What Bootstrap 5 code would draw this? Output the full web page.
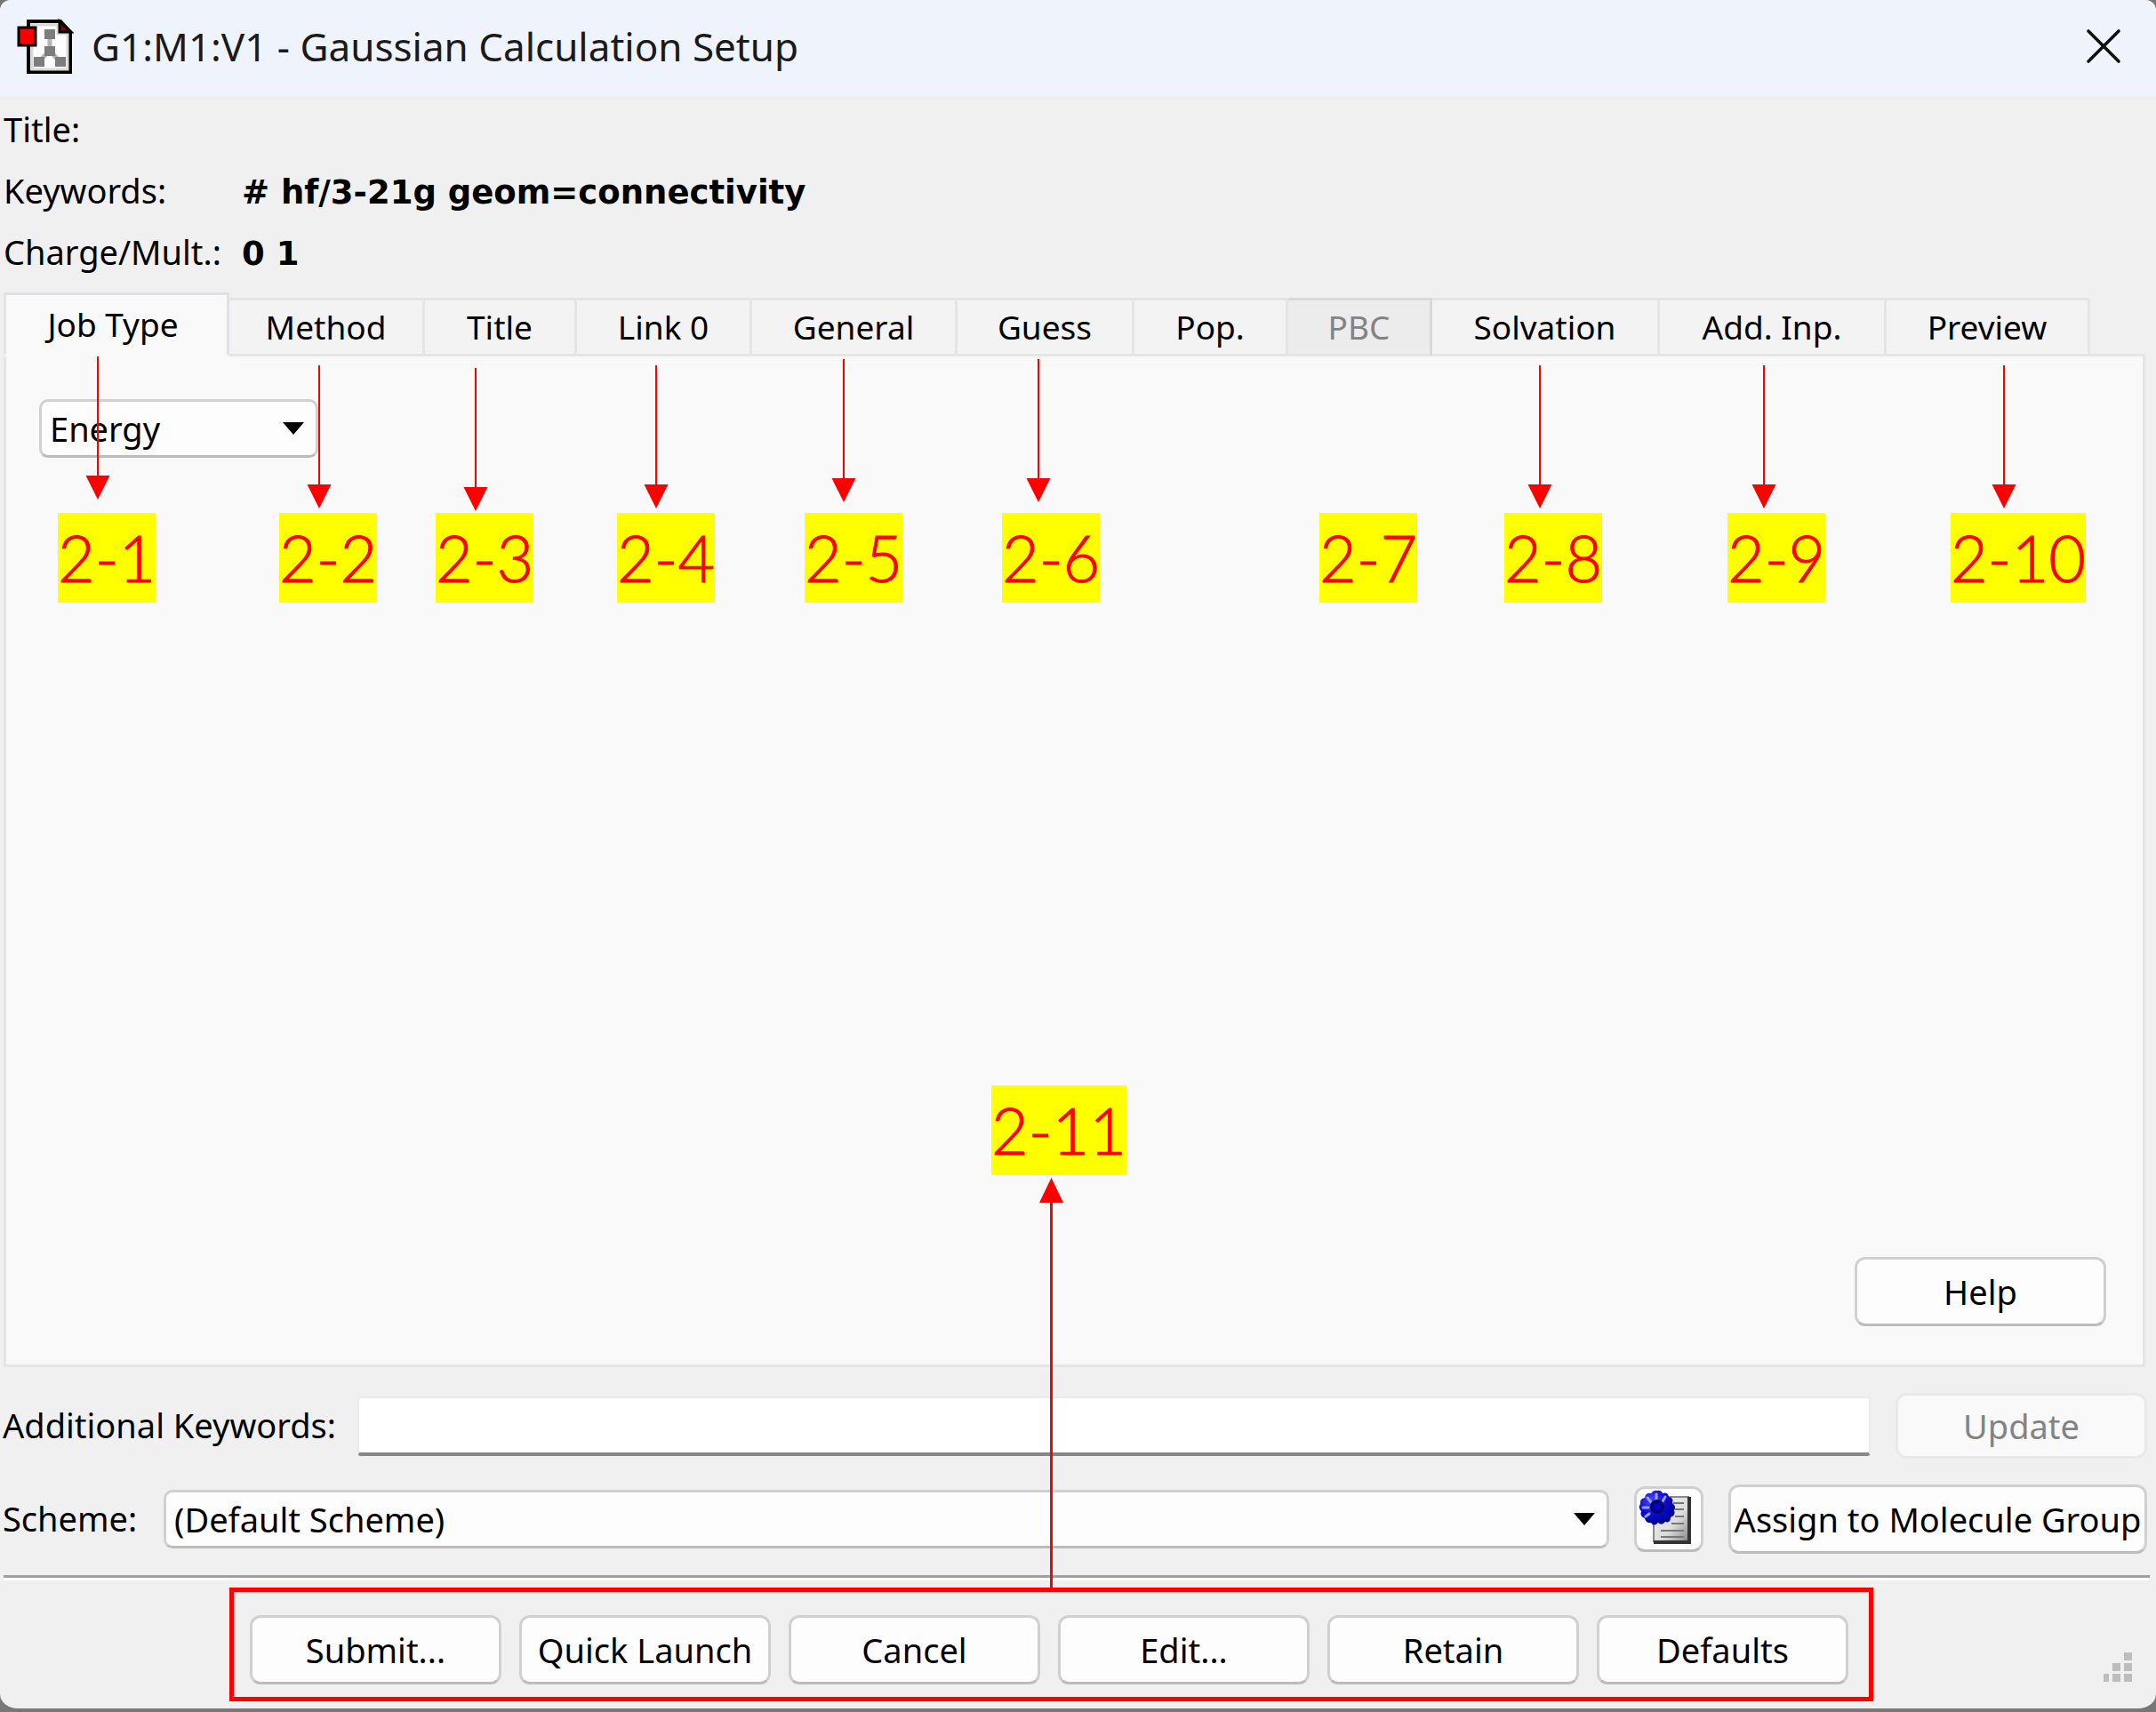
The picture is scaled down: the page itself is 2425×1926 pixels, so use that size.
<!DOCTYPE html>
<html lang="en">
<head>
<meta charset="utf-8">
<meta name="viewport" content="width=device-width, initial-scale=1">
<title>G1:M1:V1 - Gaussian Calculation Setup</title>
<link href="https://cdn.jsdelivr.net/npm/bootstrap@5.3.0/dist/css/bootstrap.min.css" rel="stylesheet">
<style>
  body { background: #777; color: #000; font: 38px/1.3 "Noto Sans", "Open Sans", sans-serif; }
  .win { min-height: 100vh; background: #f0f0f0; border-bottom: 4px solid #777; border-radius: 12px 12px 20px 20px; }
  .titlebar { height: 108px; padding: 0 39px 2px 19px; background: #eff3fb; font-size: 44px; color: #1a1a1a; border-radius: 12px 12px 0 0; }
  .title-icon { width: 64px; height: 64px; margin-right: 20px; }
  .close-x { border: 0; background: none; padding: 0; line-height: 0; margin-bottom: 2px; }

  .info { padding: 3px 4px 0; line-height: 69px; margin-bottom: 11px; }
  .info dt { width: 268px; font-weight: 400; white-space: nowrap; }
  .info dd { font: bold 37px/69px "DejaVu Sans", sans-serif; }
  .info > div { height: 69px; }

  .tabs { border: 0; padding-left: 4px; flex-wrap: nowrap; position: relative; z-index: 1; margin-bottom: -3px; height: 72px; }
  .tabs .nav-item { flex: 0 1 auto; }
  .tabs .nav-link { width: 100%; height: 66px; margin: 0; padding: 0; border: 3px solid #e5e5e5; border-left: 0; border-radius: 0; background: #f3f3f3; color: #000; font-size: 37px; line-height: 58px; }
  .tabs .nav-link:hover { border-color: #e5e5e5; }
  .tabs .nav-link.active { height: 72px; padding-right: 8px; border-left: 3px solid #e5e5e5; border-bottom-color: #f9f9f9; background: #f9f9f9; color: #000; line-height: 64px; }
  .tabs .nav-link.disabled { background: #ececec; border-color: #d9d9d9 #d9d9d9 #e5e5e5; color: #838383; }
  .w-job { width: 254px; } .w-method { width: 220px; } .w-title { width: 171px; } .w-link { width: 197px; }
  .w-general { width: 231px; } .w-guess { width: 199px; } .w-pop { width: 173px; } .w-pbc { width: 162px; }
  .w-solv { width: 256px; } .w-inp { width: 255px; } .w-prev { width: 229px; }

  .pane { margin: 0 12px 0 4px; padding: 48px 41px 43px 37px; background: #f9f9f9; border: 3px solid #e5e5e5; position: relative; }
  .combo { height: 66px; padding: 0 60px 0 9px; font-size: 38px; line-height: 58px; color: #000; border: 3px solid #d0d0d0; border-bottom-color: #bcbcbc; border-radius: 10px; background-color: #fdfdfd;
    background-image: url("data:image/svg+xml,%3Csvg xmlns='http://www.w3.org/2000/svg' viewBox='0 0 24 14'%3E%3Cpath d='M0 0h24L12 14z'/%3E%3C/svg%3E"); background-size: 24px 14px; background-position: right 13px center; }
  .combo-job { width: 314px; }
  .push { height: 78px; padding: 0; font-size: 38px; line-height: 70px; color: #000; white-space: nowrap; background: #fdfdfd; border: 3px solid #d0d0d0; border-bottom-color: #bcbcbc; border-radius: 12px; }
  .push:disabled { opacity: 1; height: 74px; line-height: 66px; color: #838383; background: #f9f9f9; border-color: #e9e9e9; }
  .push-std { width: 283px; }
  .push-wide { width: 471px; }
  .push-icon { width: 78px; height: 74px; line-height: 0; }
  .push-icon svg { overflow: visible; }

  .form-row { padding: 0 10px 0 3px; margin-top: 29px; }
  .lab-kw { width: 399px; } .lab-sch { width: 181px; }
  .gap-r { margin-right: 28px; }
  .line-edit { height: 67px; border: 2px solid #ebebeb; border-bottom: 4px solid #868686; border-radius: 4px; background: #fff; font-size: 38px; }
  .rule { margin: 24px 7px 8px 4px; border: 0; border-top: 3px solid #a0a0a0; height: 6px; background: #fff; opacity: 1; }
  .actions { margin-left: 258px; height: 128px; padding: 11px 23px 0 18px; border: 5px solid #f00; gap: 20px; }
  .grip { margin-right: 27px; }

  /* numbered callouts lying over the dialog */
  .marks { position: absolute; left: 0; top: 0; width: 2425px; height: 1922px; pointer-events: none; z-index: 5; }
  .tag { position: absolute; top: 577px; padding: 0; background: #ff0; color: #f00; font: 300 72px/101px Lato, sans-serif; -webkit-text-stroke: 1px #f00; white-space: nowrap; z-index: 6; }
  .t1 { left: 65px; } .t2 { left: 314px; } .t3 { left: 490px; } .t4 { left: 694px; } .t5 { left: 905px; } .t6 { left: 1127px; }
  .t7 { left: 1484px; } .t8 { left: 1692px; } .t9 { left: 1943px; } .t10 { left: 2194px; } .t11 { left: 1115px; top: 1221px; }
</style>
<script src="https://cdn.jsdelivr.net/npm/bootstrap@5.3.0/dist/js/bootstrap.bundle.min.js"></script>
</head>
<body>
<main class="win d-flex flex-column position-relative">
  <header class="titlebar d-flex align-items-center">
    <svg class="title-icon" viewBox="0 0 64 64" aria-hidden="true">
      <path d="M13 3H49L60 15V60H13Z" fill="#fff" stroke="#000" stroke-width="4"/>
      <path d="M17 7H46V17H57V57H17Z" fill="none" stroke="#d9d9d9" stroke-width="3"/>
      <path d="M48 3L61 15H48Z" fill="#8b0000" stroke="#000" stroke-width="3"/>
      <path d="M37 16V36L25 48M37 36L48 48" stroke="#b4b4b4" stroke-width="5" fill="none"/>
      <path d="M31 12h12v11H31zM31 31h12v11H31zM19 43h12v11H19zM43 43h12v11H43z" fill="#7d7d7d"/>
      <path d="M2 10H21V30H2Z" fill="#f00" stroke="#000" stroke-width="3"/>
    </svg>
    <span class="me-auto">G1:M1:V1 - Gaussian Calculation Setup</span>
    <button class="close-x" type="button" aria-label="Close"><svg width="40" height="40" viewBox="0 0 40 40"><path d="M3 3L37 37M37 3L3 37" stroke="#111" stroke-width="3.6" stroke-linecap="round"/></svg></button>
  </header>

  <dl class="info">
    <div class="d-flex align-items-baseline"><dt>Title:</dt><dd class="m-0"></dd></div>
    <div class="d-flex align-items-baseline"><dt>Keywords:</dt><dd class="m-0"># hf/3-21g geom=connectivity</dd></div>
    <div class="d-flex align-items-baseline"><dt>Charge/Mult.:</dt><dd class="m-0">0 1</dd></div>
  </dl>

  <ul class="nav nav-tabs tabs align-items-end" role="tablist">
    <li class="nav-item w-job"><button class="nav-link active" type="button" role="tab" aria-selected="true">Job Type</button></li>
    <li class="nav-item w-method"><button class="nav-link" type="button" role="tab">Method</button></li>
    <li class="nav-item w-title"><button class="nav-link" type="button" role="tab">Title</button></li>
    <li class="nav-item w-link"><button class="nav-link" type="button" role="tab">Link 0</button></li>
    <li class="nav-item w-general"><button class="nav-link" type="button" role="tab">General</button></li>
    <li class="nav-item w-guess"><button class="nav-link" type="button" role="tab">Guess</button></li>
    <li class="nav-item w-pop"><button class="nav-link" type="button" role="tab">Pop.</button></li>
    <li class="nav-item w-pbc"><button class="nav-link disabled" type="button" role="tab" disabled>PBC</button></li>
    <li class="nav-item w-solv"><button class="nav-link" type="button" role="tab">Solvation</button></li>
    <li class="nav-item w-inp"><button class="nav-link" type="button" role="tab">Add. Inp.</button></li>
    <li class="nav-item w-prev"><button class="nav-link" type="button" role="tab">Preview</button></li>
  </ul>

  <section class="pane flex-grow-1 d-flex flex-column justify-content-between">
    <select class="form-select combo combo-job" aria-label="Job type"><option>Energy</option></select>
    <button class="btn push push-std align-self-end" type="button">Help</button>
  </section>

  <div class="form-row d-flex align-items-center">
    <label class="lab-kw" for="kw">Additional Keywords:</label>
    <input id="kw" class="form-control line-edit flex-fill w-auto gap-r" type="text">
    <button class="btn push push-std" type="button" disabled>Update</button>
  </div>

  <div class="form-row d-flex align-items-center">
    <label class="lab-sch" for="scheme">Scheme:</label>
    <select id="scheme" class="form-select combo flex-fill w-auto gap-r"><option>(Default Scheme)</option></select>
    <button class="btn push push-icon gap-r" type="button" aria-label="Edit schemes">
      <svg width="62" height="64" viewBox="0 0 62 64">
        <defs>
          <linearGradient id="sheet" x1="0" y1="0" x2="1" y2="1"><stop offset="0" stop-color="#eee"/><stop offset=".6" stop-color="#ddd"/><stop offset="1" stop-color="#888"/></linearGradient>
          <radialGradient id="gear" cx=".35" cy=".3" r=".8"><stop offset="0" stop-color="#4a4af0"/><stop offset=".5" stop-color="#0a0ad0"/><stop offset="1" stop-color="#00007a"/></radialGradient>
        </defs>
        <path d="M14 7H53V57H14Z" fill="url(#sheet)" stroke="#8a8a8a" stroke-width="2"/>
        <path d="M54 7V58H14" fill="none" stroke="#333" stroke-width="4"/>
        <path d="M36 14H48M38 21H48M38 29H48M34 37H48M22 45H48M22 52H48" stroke="#777" stroke-width="2"/>
        <g fill="url(#gear)">
          <path d="M18 0q4-1 6 3q6-2 7 4q6 1 4 7q5 4 2 8q2 6-4 8q0 7-6 5q-4 5-8 1q-5 5-8 0q-6 1-7-5q-6-2-4-8q-4-4-1-8q-1-6 5-7q1-6 7-5q3-4 7-3z"/>
        </g>
        <path d="M17 4v6M7 8l4 5M2 19h6M27 7l-3 5M5 29l4-3" stroke="#9c9cff" stroke-width="3" stroke-linecap="round"/>
        <ellipse cx="18" cy="18" rx="6" ry="6" fill="#0000d0" stroke="#000068" stroke-width="4"/>
      </svg>
    </button>
    <button class="btn push push-wide" type="button">Assign to Molecule Group</button>
  </div>

  <hr class="rule">

  <div class="d-flex justify-content-between align-items-center mb-2">
    <div class="actions d-flex align-items-center">
      <button class="btn push push-std" type="button">Submit...</button>
      <button class="btn push push-std" type="button">Quick Launch</button>
      <button class="btn push push-std" type="button">Cancel</button>
      <button class="btn push push-std" type="button">Edit...</button>
      <button class="btn push push-std" type="button">Retain</button>
      <button class="btn push push-std" type="button">Defaults</button>
    </div>
    <svg class="grip align-self-end mb-3" width="32" height="40" viewBox="0 0 32 40" fill="#bdbdbd" aria-hidden="true"><path d="M23 1h9v9h-9zM10 13h9v9h-9zM23 13h9v9h-9zM0 25h6v9H0zM10 25h9v9h-9zM23 25h9v9h-9z"/></svg>
  </div>

  <svg class="marks" viewBox="0 0 2425 1922" fill="#f00" stroke="none" aria-hidden="true">
    <defs><path id="arr" d="M-1 0h2v134h12.500L0 161L-13.500 134H-1z"/></defs>
    <use href="#arr" x="110" y="401"/><use href="#arr" x="359" y="411"/><use href="#arr" x="535" y="414"/>
    <use href="#arr" x="738" y="411"/><use href="#arr" x="949" y="404"/><use href="#arr" x="1168" y="404"/>
    <use href="#arr" x="1732" y="411"/><use href="#arr" x="1984" y="411"/><use href="#arr" x="2254" y="411"/>
    <path d="M1181 1788V1353h-12L1182.500 1325L1196 1353h-12V1788z"/>
  </svg>
  <span class="tag t1">2-1</span><span class="tag t2">2-2</span><span class="tag t3">2-3</span><span class="tag t4">2-4</span>
  <span class="tag t5">2-5</span><span class="tag t6">2-6</span><span class="tag t7">2-7</span><span class="tag t8">2-8</span>
  <span class="tag t9">2-9</span><span class="tag t10">2-10</span><span class="tag t11">2-11</span>
</main>
</body>
</html>
